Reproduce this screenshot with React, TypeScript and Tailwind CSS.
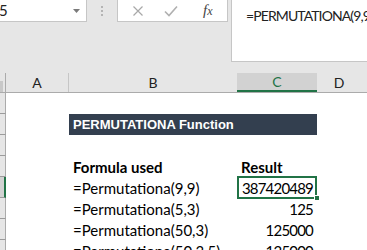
import React from "react";

const rows: { b?: string; c?: string; kind?: "title" | "head" | "sel" }[] = [
  {},
  { kind: "title" },
  {},
  { b: "Formula used", c: "Result", kind: "head" },
  { b: "=Permutationa(9,9)", c: "387420489", kind: "sel" },
  { b: "=Permutationa(5,3)", c: "125" },
  { b: "=Permutationa(50,3)", c: "125000" },
  { b: "=Permutationa(50,3,5)", c: "125000" },
];

const cellFont = { fontFamily: "Lato, 'Liberation Sans', sans-serif" };

export default function App() {
  return (
    <div className="w-[367px] h-[250px] overflow-hidden bg-white relative">
      {/* formula bar area */}
      <div className="h-[73px] bg-[#e6e6e6] flex items-start">
        <div className="w-[87px] h-[22px] bg-white border-r border-b border-[#c6c6c6] flex items-center justify-between pr-[6px]">
          <span className="text-[15px] text-[#222] leading-none -ml-[1px]" style={cellFont}>5</span>
          <svg width="7" height="4" viewBox="0 0 7 4"><path d="M0 0h7L3.5 4z" fill="#7a7a7a" /></svg>
        </div>
        <div className="w-[30px] h-[22px] flex flex-col items-center justify-center gap-[2px]">
          <span className="w-[2px] h-[2px] bg-[#b4b4b4]" />
          <span className="w-[2px] h-[2px] bg-[#b4b4b4]" />
          <span className="w-[2px] h-[2px] bg-[#b4b4b4]" />
        </div>
        <div className="w-[111px] h-[22px] bg-white border-l border-r border-b border-[#c6c6c6] flex items-center pl-[14px]">
          <svg width="12" height="12" viewBox="0 0 12 12">
            <path d="M1.5 1.5l9 9M10.5 1.5l-9 9" stroke="#a8a8a8" strokeWidth="1.2" fill="none" />
          </svg>
          <svg width="14" height="12" viewBox="0 0 14 12" className="ml-[20px]">
            <path d="M1 6.5l4 4L13 1.5" stroke="#b0b0b0" strokeWidth="1.6" fill="none" />
          </svg>
          <span
            className="ml-[25px] text-[15px] italic text-[#444] leading-none"
            style={{ fontFamily: "'Liberation Serif', serif" }}
          >
            f<span className="text-[12px]">x</span>
          </span>
        </div>
        <div className="ml-[3px] flex-1 h-[62px] bg-white border-l border-b border-[#c6c6c6] pl-[14px] pt-[3px] whitespace-nowrap overflow-hidden">
          <span className="text-[14px] text-[#222] tracking-[-0.9px]" style={cellFont}>=PERMUTATIONA(9,9)</span>
        </div>
      </div>

      {/* column headers */}
      <div className="flex h-[20px] bg-[#e6e6e6] border-b border-[#ababab]">
        <div className="w-[6px] border-r border-[#ababab] flex items-end">
          <div className="w-[3px] h-[11px] bg-[#c8c8c8]" />
        </div>
        <div className="w-[63px] border-r border-[#c6c6c6] flex items-center justify-center text-[14px] text-[#222]" style={cellFont}>A</div>
        <div className="w-[168px] flex items-center justify-center text-[14px] text-[#222]" style={cellFont}>B</div>
        <div className="w-[80px] bg-[#d2d2d2] border-b-2 border-[#217346] flex items-center justify-center text-[14px] text-[#217346]" style={cellFont}>C</div>
        <div className="flex-1 flex items-center justify-center text-[14px] text-[#222] pr-[6px]" style={cellFont}>D</div>
      </div>

      {/* rows */}
      {rows.map((r, i) => (
        <div key={i} className="flex h-[21px]">
          <div
            className={
              r.kind === "sel"
                ? "w-[6px] border-r-2 border-b border-r-[#217346] border-b-[#9b9b9b] bg-[#d2d2d2]"
                : "w-[6px] border-r border-b border-r-[#ababab] border-b-[#9b9b9b] bg-[#e6e6e6]"
            }
          />
          <div className="w-[63px]" />
          {r.kind === "title" ? (
            <div
              className="w-[248px] bg-[#333f4f] text-white font-bold text-[13px] flex items-center pl-[4px] pt-[1px]"
              style={{ fontFamily: "'Liberation Sans', Arial, sans-serif" }}
            >
              PERMUTATIONA Function
            </div>
          ) : (
            <>
              <div
                className={`w-[168px] flex items-end pl-[4px] pb-[1px] text-[15px] text-black leading-[18px] whitespace-nowrap ${r.kind === "head" ? "font-bold" : ""}`}
                style={cellFont}
              >
                {r.b}
              </div>
              <div
                className={`w-[80px] flex items-end pb-[1px] text-[15px] text-black leading-[18px] whitespace-nowrap relative ${r.kind === "head" ? "font-bold justify-start pl-[4px]" : "justify-end pr-[4px] tracking-[-0.8px]"}`}
                style={cellFont}
              >
                {r.c}
                {r.kind === "sel" && (
                  <>
                    <div className="absolute left-0 -top-[1px] right-0 -bottom-[1px] border-2 border-[#217346]" />
                    <div className="absolute -right-[3px] -bottom-[3px] w-[6px] h-[6px] bg-[#217346] border border-white" />
                  </>
                )}
              </div>
            </>
          )}
        </div>
      ))}
    </div>
  );
}
